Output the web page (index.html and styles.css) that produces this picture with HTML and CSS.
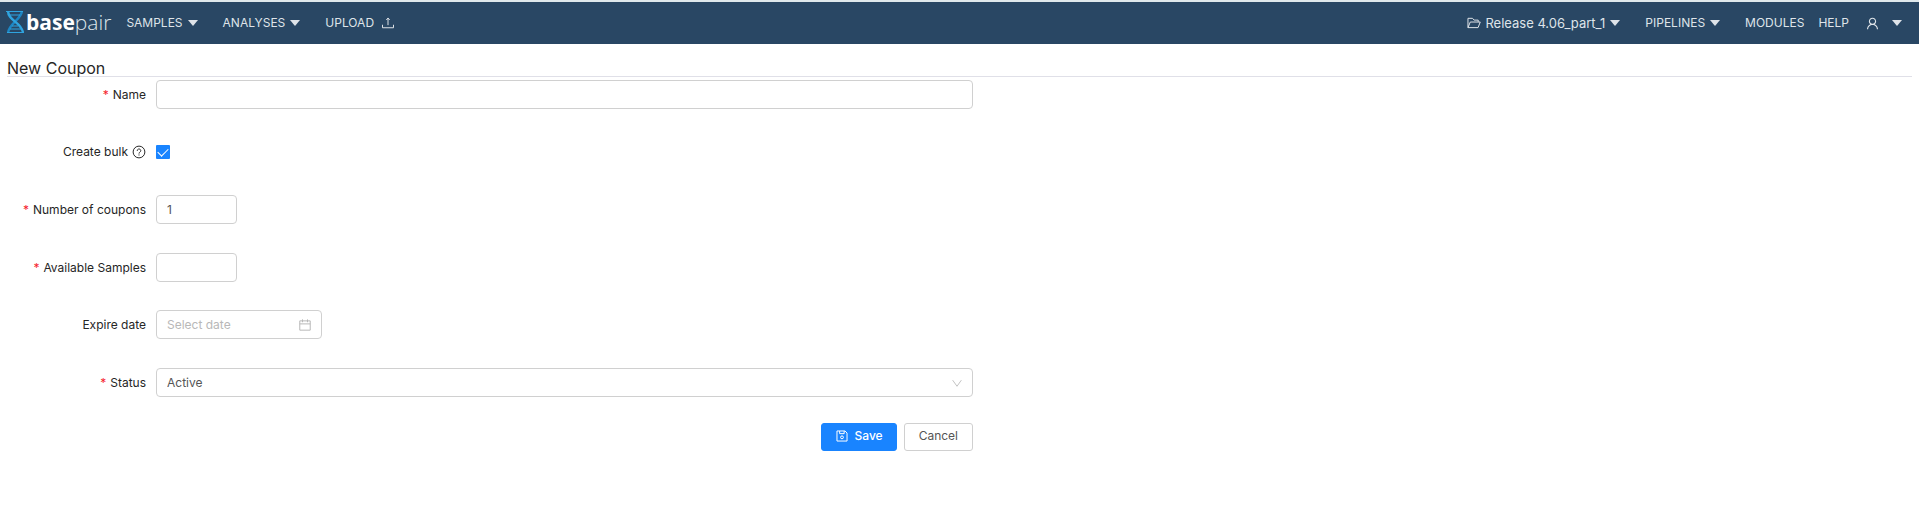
FILE: index.html
```html
<!DOCTYPE html>
<html lang="en">
<head>
<meta charset="utf-8">
<title>New Coupon - Basepair</title>
<link rel="stylesheet" href="styles.css">
</head>
<body>
<header class="navbar">
  <a class="logo" href="#">
    <svg class="helix" viewBox="0 0 18 24" fill="none" stroke="#2fa4df" stroke-width="2.400">
      <path d="M16 1C15 10 3 13 2 23" stroke="#1c86c4"/>
      <path d="M2 1C2 11 16 12 17 23"/>
      <path d="M0 1.500H17M4 5H14M6 16H12M4 19H15M1 22.500H18" stroke-width="1.200"/>
    </svg>
    <span class="wordmark"><b>base</b>pair</span>
  </a>
  <nav class="menu menu-left">
    <a href="#">SAMPLES <span class="caret"></span></a>
    <a href="#">ANALYSES <span class="caret"></span></a>
    <a href="#" class="with-icon">UPLOAD
      <svg class="icon" viewBox="0 0 1024 1024"><path d="M110 640V860H914V640M512 670V140M390 290L512 150L634 290"/></svg>
    </a>
  </nav>
  <nav class="menu menu-right">
    <a href="#" class="release">
      <svg class="icon" viewBox="0 0 1024 1024"><path d="M70 850V170H400L520 300H820V430M70 850L240 440H970L810 850Z"/></svg>
      Release 4.06_part_1 <span class="caret"></span></a>
    <a href="#">PIPELINES <span class="caret"></span></a>
    <a href="#">MODULES</a>
    <a href="#" class="help">HELP</a>
    <a href="#" class="account" aria-label="Account">
      <svg class="icon solid" viewBox="0 0 1024 1024"><path d="M858.5 763.6a374 374 0 00-80.6-119.5 375.63 375.63 0 00-119.5-80.6c-.4-.2-.8-.3-1.2-.5C719.5 518 760 444.7 760 362c0-137-111-248-248-248S264 225 264 362c0 82.7 40.5 156 102.8 201.1-.4.2-.8.3-1.2.5-44.8 18.9-85 46-119.5 80.6a375.63 375.63 0 00-80.6 119.5A371.7 371.7 0 00136 901.8a8 8 0 008 8.2h60c4.4 0 7.9-3.5 8-7.8 2-77.2 33-149.5 87.8-204.3 56.7-56.7 132-87.9 212.2-87.9s155.5 31.2 212.2 87.9C779 752.7 810 825 812 902.2c.1 4.4 3.6 7.8 8 7.8h60a8 8 0 008-8.2c-1-47.8-10.9-94.3-29.5-138.2zM512 534c-45.9 0-89.1-17.9-121.6-50.4S340 407.9 340 362c0-45.9 17.9-89.1 50.4-121.6S466.1 190 512 190s89.1 17.9 121.6 50.4S684 316.1 684 362c0 45.9-17.9 89.1-50.4 121.6S557.9 534 512 534z"/></svg>
      <span class="caret"></span></a>
  </nav>
</header>
<main class="page">
  <h1 class="title">New Coupon</h1>
  <form class="form">
    <div class="row">
      <label class="label required" for="name">Name</label>
      <input class="control" id="name" type="text">
    </div>
    <div class="row row-compact">
      <label class="label" for="bulk">Create bulk
        <svg class="icon help-icon" viewBox="0 0 1024 1024"><circle cx="512" cy="512" r="430"/><path d="M380 430C380 250 644 250 644 420C644 520 512 510 512 630M512 690V770"/></svg>
      </label>
      <input class="check" id="bulk" type="checkbox" checked>
    </div>
    <div class="row">
      <label class="label required" for="count">Number of coupons</label>
      <input class="control short" id="count" type="text" inputmode="numeric" value="1">
    </div>
    <div class="row row-compact">
      <label class="label required" for="samples">Available Samples</label>
      <input class="control short" id="samples" type="text" inputmode="numeric">
    </div>
    <div class="row">
      <label class="label" for="expire">Expire date</label>
      <div class="control date">
        <input class="date-input" id="expire" type="text" placeholder="Select date">
        <svg class="icon" viewBox="0 0 1024 1024"><path d="M130 210H894V890H130ZM130 430H894M330 100V310M694 100V310"/></svg>
      </div>
    </div>
    <div class="row">
      <label class="label required" for="status">Status</label>
      <div class="select-wrap">
        <select class="control" id="status"><option>Active</option><option>Inactive</option></select>
        <svg class="icon arrow" viewBox="0 0 1024 1024"><path d="M140 270L512 790L884 270"/></svg>
      </div>
    </div>
    <div class="actions">
      <button class="btn primary" type="submit">
        <svg class="icon" viewBox="0 0 1024 1024"><path d="M145 145H730L880 295V880H145ZM340 145V340H670V145"/><circle cx="512" cy="610" r="105"/></svg>
        Save</button>
      <button class="btn" type="button">Cancel</button>
    </div>
  </form>
</main>
</body>
</html>
```
FILE: styles.css
```css
* { box-sizing: border-box; }

body {
  margin: 0;
  border-top: 2px solid #dfe9ec;
  background: #fff;
  color: #262626;
  font: 12px/20px Inter, "Liberation Sans", sans-serif;
}

.navbar {
  display: flex;
  align-items: center;
  height: 42px;
  padding: 0 17px 0 6px;
  background: #294764;
  color: #dfe4e9;
}

.navbar a { color: inherit; text-decoration: none; }

.logo {
  display: flex;
  align-items: center;
  gap: 2px;
  padding-bottom: 2px;
}

.helix { width: 18px; height: 24px; }

.wordmark {
  color: #dfe6ec;
  font: 300 21px/28px "Open Sans", "Noto Sans", sans-serif;
}

.wordmark b { color: #fff; font-weight: 700; }

.menu { display: flex; align-items: center; gap: 25px; }

.menu a { display: flex; align-items: center; gap: 5px; }

.menu-left { margin-left: 15px; }

.menu-left .with-icon { gap: 7px; }

.menu-right { margin-left: auto; }

.menu-right .release { gap: 4px; font-size: 13px; }

.release .caret { margin-left: 1px; }

.menu-right .help { margin-left: -11px; }

.menu-right .account { gap: 12px; margin-left: -9px; }

.caret {
  border: 5px solid transparent;
  border-top: 6px solid currentColor;
  border-bottom: 0;
}

.icon {
  flex: none;
  width: 14px;
  height: 14px;
  fill: none;
  stroke: currentColor;
  stroke-width: 72;
}

.icon.solid {
  width: 15px;
  height: 15px;
  fill: currentColor;
  stroke: none;
}

.page { padding: 16px 7px 0; }

.title {
  margin: 0 0 3px;
  border-bottom: 1px solid #e0e0e8;
  font-size: 16px;
  font-weight: 400;
  line-height: 16px;
}

.form {
  display: grid;
  gap: 29px;
  max-width: 966px;
}

.row {
  display: grid;
  grid-template-columns: 139px 1fr;
  align-items: center;
  gap: 10px;
  height: 29px;
}

.row-compact { height: 28px; }

.label {
  display: flex;
  align-items: center;
  justify-content: flex-end;
  gap: 4px;
}

.required::before { content: "*"; color: #f5222d; }

.control {
  width: 100%;
  height: 29px;
  padding: 0 10px;
  border: 1px solid #d0d0d0;
  border-radius: 4px;
  background: #fff;
  color: #555;
  font: inherit;
}

.short { width: 81px; }

.date {
  display: flex;
  align-items: center;
  width: 166px;
  padding-right: 9px;
  color: #b8b8b8;
}

.date-input {
  flex: 1;
  min-width: 0;
  padding: 0;
  border: 0;
  outline: 0;
  font: inherit;
}

.date-input::placeholder { color: #b8b8b8; }

.check {
  appearance: none;
  display: grid;
  place-items: center;
  width: 14px;
  height: 14px;
  margin: 0;
  border-radius: 1px;
  background: #1984ff;
}

.check:checked::after {
  content: "";
  width: 5px;
  height: 9px;
  margin-bottom: 2px;
  border: solid #fff;
  border-width: 0 1px 1px 0;
  rotate: 45deg;
}

.select-wrap { display: grid; align-items: center; }

.select-wrap > * { grid-area: 1 / 1; }

.select-wrap select { appearance: none; }

.arrow {
  justify-self: end;
  width: 12px;
  height: 12px;
  margin-right: 10px;
  color: #b8b8b8;
  pointer-events: none;
}

.actions {
  display: flex;
  justify-content: flex-end;
  gap: 7px;
  margin-top: -3px;
}

.btn {
  display: flex;
  align-items: center;
  gap: 6px;
  height: 28px;
  padding: 0 14px 2px;
  border: 1px solid #d0d0d0;
  border-radius: 3px;
  background: #fff;
  color: #555;
  font: inherit;
}

.primary {
  padding: 0 13px 2px;
  border-color: #1984ff;
  background: #1984ff;
  color: #fff;
  font-weight: 500;
}
```
